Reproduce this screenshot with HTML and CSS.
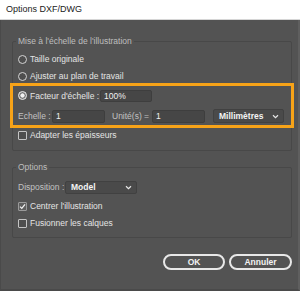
FILE: index.html
```html
<!DOCTYPE html>
<html>
<head>
<meta charset="utf-8">
<title>Options DXF/DWG</title>
<link rel="stylesheet" href="styles.css">
</head>
<body>
<div class="dialog">
  <div class="titlebar">Options DXF/DWG</div>
  <div class="content">
    <fieldset class="group">
      <legend>Mise à l'échelle de l'illustration</legend>
      <div class="option"><span class="radio"></span>Taille originale</div>
      <div class="option spaced"><span class="radio"></span>Ajuster au plan de travail</div>
      <div class="highlight">
        <div class="row first">
          <div class="option factor"><span class="radio on"></span>Facteur d'échelle :</div>
          <div class="field percent">100%</div>
        </div>
        <div class="row second">
          <span class="caption scale-caption">Echelle :</span>
          <div class="field num">1</div>
          <span class="caption unit-caption">Unité(s) =</span>
          <div class="field num">1</div>
          <div class="select unit-select">Millimètres
            <svg width="7" height="5" viewBox="0 0 7 5"><path d="M1 1.2l2.5 2.4 2.5-2.4" fill="none" stroke="#e8e8e8" stroke-width="1.2"/></svg>
          </div>
        </div>
      </div>
      <div class="option"><span class="check"></span>Adapter les épaisseurs</div>
    </fieldset>

    <fieldset class="group options">
      <legend>Options</legend>
      <div class="row disposition">
        <span class="caption dispo-caption">Disposition :</span>
        <div class="select model-select">Model
          <svg width="7" height="5" viewBox="0 0 7 5"><path d="M1 1.2l2.5 2.4 2.5-2.4" fill="none" stroke="#e8e8e8" stroke-width="1.2"/></svg>
        </div>
      </div>
      <div class="option center-opt"><span class="check on"><svg width="7" height="7" viewBox="0 0 7 7"><path d="M1 3.6l1.8 1.8L6 1.4" fill="none" stroke="#f2f2f2" stroke-width="1.3"/></svg></span>Centrer l'illustration</div>
      <div class="option spaced"><span class="check"></span>Fusionner les calques</div>
    </fieldset>

    <div class="buttons">
      <button class="btn ok">OK</button>
      <button class="btn cancel">Annuler</button>
    </div>
  </div>
</div>
</body>
</html>
```

FILE: styles.css
```css
body {
  margin: 0;
  font-family: "Liberation Sans", Arial, sans-serif;
  font-size: 8.5px;
}

.dialog {
  width: 300px;
  height: 291px;
  display: flex;
  flex-direction: column;
}

.titlebar {
  height: 19px;
  line-height: 19px;
  padding-left: 6px;
  background: #fff;
  color: #1a1a1a;
  font-size: 9px;
  border-bottom: 1px solid #d6d6d6;
}

.content {
  flex: 1;
  background: #535353;
  color: #e4e4e4;
  border-left: 1px solid #4a4a4a;
  border-right: 2px solid #5f5f5f;
  border-bottom: 2px solid #4a4a4a;
  padding: 15px 6px 0 11px;
}

.group {
  margin: 0;
  padding: 5px 5px 8px;
  border: 1px solid #484848;
  border-radius: 2px;
}

.group legend {
  padding: 0 2px;
  margin-left: -2px;
  line-height: 12px;
  color: #bebebe;
}

.options {
  margin-top: 10px;
  padding: 7px 5px 7px;
}

.option {
  display: flex;
  align-items: center;
  gap: 3px;
  height: 14px;
}

.option.spaced {
  margin-top: 3px;
}

.radio {
  width: 9px;
  height: 9px;
  box-sizing: border-box;
  border: 1px solid #d4d4d4;
  border-radius: 50%;
  background: #4e4e4e;
}

.radio.on {
  border-color: #f0f0f0;
  background: radial-gradient(circle, #f2f2f2 0 1.8px, #7a7a7a 2.4px);
}

.check {
  width: 9px;
  height: 9px;
  box-sizing: border-box;
  border: 1px solid #c4c4c4;
  border-radius: 1px;
  background: #4e4e4e;
  display: flex;
  align-items: center;
  justify-content: center;
}

.check.on {
  background: #5e5e5e;
  border-color: #9a9a9a;
}

.highlight {
  margin: 0 -8px;
  border: 3px solid #f7a318;
  padding: 3px 5px 2px;
}

.row {
  display: flex;
  align-items: center;
}

.row.first {
  height: 13px;
}

.row.second {
  height: 14px;
  margin-top: 7px;
}

.factor {
  width: 82px;
  height: 13px;
}

.caption {
  color: #c2c2c2;
}

.scale-caption {
  width: 34px;
}

.unit-caption {
  width: 40px;
  margin-left: 7px;
}

.dispo-caption {
  width: 47px;
}

.field {
  height: 13px;
  box-sizing: border-box;
  background: #464646;
  border: 1px solid #3e3e3e;
  border-radius: 2px;
  padding-left: 3px;
  line-height: 11px;
  color: #f0f0f0;
}

.percent {
  width: 52px;
  height: 12px;
  line-height: 10px;
}

.num {
  width: 53px;
}

.select {
  height: 14px;
  box-sizing: border-box;
  background: #4a4a4a;
  border: 1px solid #414141;
  border-radius: 2px;
  padding: 0 4px 0 5px;
  display: flex;
  align-items: center;
  justify-content: space-between;
  font-weight: bold;
  color: #f4f4f4;
}

.unit-select {
  width: 71px;
  margin-left: 8px;
}

.disposition {
  height: 14px;
}

.model-select {
  width: 72px;
  height: 13px;
}

.center-opt {
  margin-top: 5px;
}

.buttons {
  display: flex;
  justify-content: flex-end;
  gap: 4px;
  margin-top: 16px;
}

.btn {
  height: 16px;
  box-sizing: border-box;
  border: 2px solid #e8e8e8;
  border-radius: 8px;
  background: transparent;
  color: #f2f2f2;
  font-family: inherit;
  font-size: 8.5px;
  font-weight: bold;
  padding: 0;
}

.ok {
  width: 62px;
}

.cancel {
  width: 63px;
}
```
